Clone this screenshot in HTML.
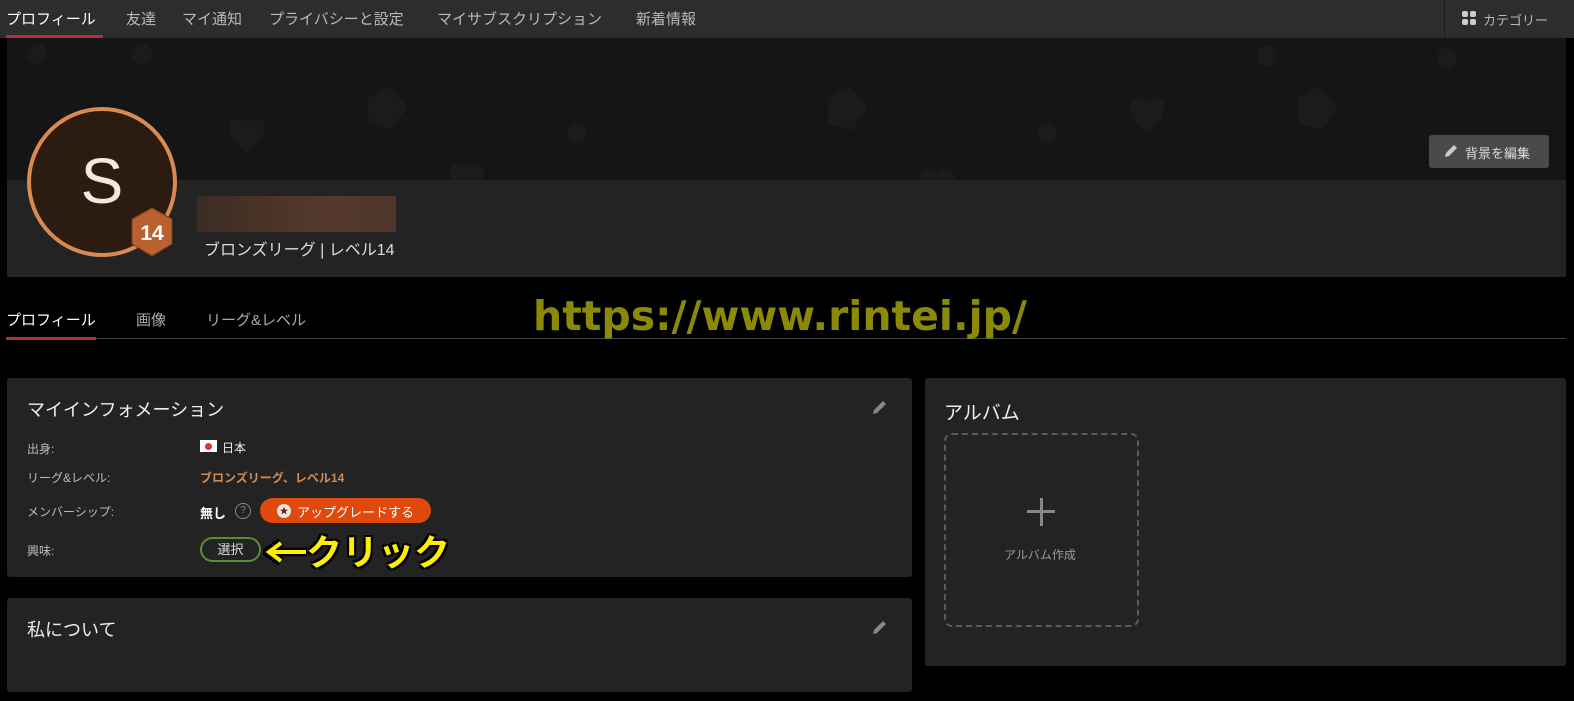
<!DOCTYPE html>
<html><head><meta charset="utf-8"><style>
*{margin:0;padding:0;box-sizing:border-box}
body{width:1574px;height:701px;background:#000;position:relative;overflow:hidden;font-family:"Liberation Sans","Noto Sans CJK JP",sans-serif;color:#ddd}
.a{position:absolute;white-space:nowrap}
.nav{left:0;top:0;width:1574px;height:38px;background:#2c2d2f}
.nav span{position:absolute;top:8px;font-size:15px;color:#b8b8b8}
.card{position:absolute;background:#232323;border-radius:3px}
.lbl{font-size:12px;color:#bbb}
.val{font-size:12px;color:#eee}
</style></head><body>
<div class="a nav">
<span style="left:6px;color:#fff">プロフィール</span>
<span style="left:126px">友達</span>
<span style="left:182px">マイ通知</span>
<span style="left:269px">プライバシーと設定</span>
<span style="left:437px">マイサブスクリプション</span>
<span style="left:636px">新着情報</span>
<div class="a" style="left:6px;top:35px;width:97px;height:3px;background:#b8303a"></div>
<div class="a" style="left:1444px;top:0;width:1px;height:38px;background:#1a1a1a"></div>
<div class="a" style="left:1462px;top:11px;width:15px;height:15px">
<div class="a" style="left:0;top:0;width:6px;height:6px;border-radius:2px;background:#ccc"></div><div class="a" style="left:8px;top:0;width:6px;height:6px;border-radius:2px;background:#ccc"></div><div class="a" style="left:0;top:8px;width:6px;height:6px;border-radius:2px;background:#ccc"></div><div class="a" style="left:8px;top:8px;width:6px;height:6px;border-radius:2px;background:#ccc"></div></div>
<span style="left:1483px;top:10px;font-size:13px">カテゴリー</span>
</div>
<div class="a" style="left:7px;top:38px;width:1559px;height:142px;background:#151515"></div>
<svg class="a" style="left:7px;top:38px" width="1559" height="142">
<g fill="#1b1b1b">
<path d="M230 105 c-12 -14 -8 -25 2 -24 c5 0 8 4 8 4 c0 0 3 -4 8 -4 c10 -1 14 10 2 24 l-10 10z"/>
<path d="M450 150 c-12 -14 -8 -25 2 -24 c5 0 8 4 8 4 c0 0 3 -4 8 -4 c10 -1 14 10 2 24 l-10 10z"/>
<path d="M1130 85 c-12 -14 -8 -25 2 -24 c5 0 8 4 8 4 c0 0 3 -4 8 -4 c10 -1 14 10 2 24 l-10 10z"/>
<path d="M920 155 c-12 -14 -8 -25 2 -24 c5 0 8 4 8 4 c0 0 3 -4 8 -4 c10 -1 14 10 2 24 l-10 10z"/>
<path d="M360 60 l22 -12 l18 20 l-14 24 l-24 -6z"/>
<path d="M820 60 l22 -12 l18 20 l-14 24 l-24 -6z"/>
<path d="M1290 60 l22 -12 l18 20 l-14 24 l-24 -6z"/>
<circle cx="30" cy="16" r="10"/><circle cx="135" cy="16" r="10"/><circle cx="1260" cy="18" r="10"/><circle cx="1440" cy="20" r="10"/>
<circle cx="570" cy="95" r="10"/><circle cx="1040" cy="95" r="10"/>
</g></svg>
<div class="a" style="left:1429px;top:135px;width:120px;height:33px;background:#4a4a4a;border-radius:3px;color:#ddd;font-size:13px;padding:8px 0 0 36px">背景を編集</div>
<svg class="a" style="left:1444px;top:144px" width="14" height="14"><path d="M1 13 l1 -4 l8 -8 l3 3 l-8 8z" fill="#ccc"/></svg>
<div class="a" style="left:7px;top:180px;width:1559px;height:97px;background:#232323"></div>
<div class="a" style="left:27px;top:107px;width:150px;height:150px;border-radius:50%;border:4px solid #d98a52;background:#2c1b10;color:#f4e8de;font-size:64px;text-align:center;line-height:140px">S</div>
<svg class="a" style="left:129px;top:206px" width="46" height="52"><polygon points="23,2 43,13 43,38 23,50 3,38 3,13" fill="#b96230" stroke="#7a3a15" stroke-width="1"/><text x="23" y="34" font-size="21" font-weight="bold" fill="#fff" text-anchor="middle" font-family="Liberation Sans">14</text></svg>
<div class="a" style="left:197px;top:196px;width:199px;height:36px;background:linear-gradient(90deg,#3a2c25,#4a3326,#553a2c,#4e3529)"></div>
<div class="a" style="left:204px;top:236px;font-size:16px;color:#ddd">ブロンズリーグ | レベル14</div>
<div class="a" style="left:6px;top:309px;font-size:15px;color:#fff">プロフィール</div>
<div class="a" style="left:136px;top:309px;font-size:15px;color:#aaa">画像</div>
<div class="a" style="left:206px;top:309px;font-size:15px;color:#aaa">リーグ&amp;レベル</div>
<div class="a" style="left:6px;top:338px;width:1560px;height:1px;background:#444"></div>
<div class="a" style="left:6px;top:337px;width:90px;height:3px;background:#b8303a"></div>
<div class="a" style="left:533px;top:292px;font-family:'DejaVu Sans',sans-serif;font-weight:bold;font-size:41px;color:#8a8a08;letter-spacing:0px">https://www.rintei.jp/</div>
<div class="card" style="left:7px;top:378px;width:905px;height:199px"></div>
<div class="a" style="left:27px;top:396px;font-size:18px;color:#eee">マイインフォメーション</div>
<svg class="a" style="left:872px;top:399px" width="16" height="16"><path d="M1 15 l1 -4 l9 -9 l3 3 l-9 9z" fill="#888"/></svg>
<div class="a lbl" style="left:27px;top:440px">出身:</div>
<div class="a" style="left:200px;top:440px;width:17px;height:12px;background:#fff"><div class="a" style="left:5px;top:3px;width:7px;height:7px;border-radius:50%;background:#d33"></div></div>
<div class="a val" style="left:222px;top:439px">日本</div>
<div class="a lbl" style="left:27px;top:469px">リーグ&amp;レベル:</div>
<div class="a" style="left:200px;top:469px;font-size:12px;font-weight:bold;color:#d08a55">ブロンズリーグ、レベル14</div>
<div class="a lbl" style="left:27px;top:503px">メンバーシップ:</div>
<div class="a" style="left:200px;top:503px;font-size:13px;font-weight:bold;color:#fff">無し</div>
<div class="a" style="left:235px;top:503px;width:16px;height:16px;border:1px solid #888;border-radius:50%;font-size:10px;color:#888;text-align:center;line-height:14px">?</div>
<div class="a" style="left:260px;top:498px;width:171px;height:25px;background:#e0490e;border-radius:13px;color:#fff;font-size:13px;padding:4px 0 0 37px">アップグレードする</div>
<div class="a" style="left:277px;top:504px;width:14px;height:14px;border-radius:50%;background:#f2e6e0;color:#6a1a10;font-size:9px;text-align:center;line-height:14px">★</div>
<div class="a lbl" style="left:27px;top:542px">興味:</div>
<div class="a" style="left:200px;top:537px;width:61px;height:25px;border:2px solid #5a8a3a;border-radius:13px;color:#ddd;font-size:13px;text-align:center;line-height:21px">選択</div>
<svg class="a" style="left:263px;top:538px" width="46" height="28"><path d="M4 14 L44 14" stroke="#000" stroke-width="9"/><path d="M18 4 L4 14 L18 24" fill="none" stroke="#000" stroke-width="9"/><path d="M6 14 L43 14" stroke="#ffee00" stroke-width="4"/><path d="M18 5 L6 14 L18 23" fill="none" stroke="#ffee00" stroke-width="4"/></svg>
<div class="a" style="left:306px;top:524px;font-size:36px;font-weight:bold;color:#ffee00;text-shadow:2px 2px 0 #000,-2px -2px 0 #000,2px -2px 0 #000,-2px 2px 0 #000">クリック</div>
<div class="card" style="left:7px;top:598px;width:905px;height:94px"></div>
<div class="a" style="left:27px;top:616px;font-size:18px;color:#eee">私について</div>
<svg class="a" style="left:872px;top:619px" width="16" height="16"><path d="M1 15 l1 -4 l9 -9 l3 3 l-9 9z" fill="#888"/></svg>
<div class="card" style="left:925px;top:378px;width:641px;height:288px"></div>
<div class="a" style="left:944px;top:398px;font-size:19px;color:#eee">アルバム</div>
<div class="a" style="left:944px;top:433px;width:195px;height:194px;border:2px dashed #5a5a5a;border-radius:8px"></div>
<div class="a" style="left:1027px;top:510px;width:28px;height:3px;background:#888"></div>
<div class="a" style="left:1040px;top:498px;width:3px;height:28px;background:#888"></div>
<div class="a" style="left:1004px;top:546px;font-size:12px;color:#999">アルバム作成</div>
</body></html>
